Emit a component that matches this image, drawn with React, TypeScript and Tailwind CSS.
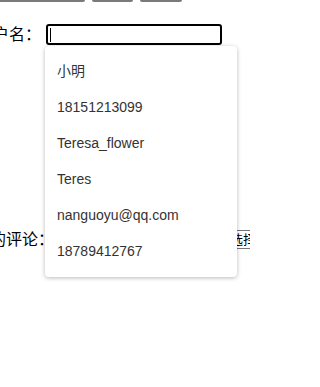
import React from 'react';

const OPTIONS = ['小明', '18151213099', 'Teresa_flower', 'Teres', 'nanguoyu@qq.com', '18789412767'];

const font = { fontFamily: '"Liberation Sans", "Noto Sans CJK SC", sans-serif' };

export default function App() {
  return (
    <div className="relative w-[250px] h-[387px] overflow-hidden bg-white text-black" style={font}>
      {/* toolbar buttons, scrolled mostly out of view */}
      <div className="flex gap-[7px] -ml-[10px]">
        <div className="w-[95px] h-[2px] bg-[#7a7a7a] rounded-b-[2px]" />
        <div className="w-[41px] h-[2px] bg-[#7a7a7a] rounded-b-[2px]" />
        <div className="w-[42px] h-[2px] bg-[#7a7a7a] rounded-b-[2px]" />
      </div>

      {/* user name row */}
      <div className="flex items-center mt-[22px] -ml-[23px]">
        <span className="shrink-0 text-[16px] leading-[21px] w-[69px] whitespace-nowrap">用户名：</span>
        <div className="shrink-0 w-[176px] h-[21px] border-2 border-black rounded-[3px] flex items-center pl-[2px]">
          <div className="w-px h-[14px] bg-black" />
        </div>
      </div>

      {/* comment row */}
      <div className="flex items-center mt-[184px] -ml-[10px]">
        <span className="shrink-0 text-[16px] leading-[21px] w-[66px] whitespace-nowrap">的评论：</span>
        <div className="shrink-0 h-[19px] w-[240px] border border-[#767676] bg-white pl-[173px] text-[13px] leading-[17px] whitespace-nowrap">
          选择文件
        </div>
      </div>

      {/* autocomplete dropdown */}
      <div className="absolute left-[45px] top-[46px] w-[192px] bg-white rounded-[4px] shadow-[0_1px_4px_rgba(0,0,0,0.28)] pt-[7px] pb-[8px]">
        {OPTIONS.map((o) => (
          <div key={o} className="h-[36px] flex items-center pl-[12px] text-[14px] text-[#333]">
            {o}
          </div>
        ))}
      </div>
    </div>
  );
}
